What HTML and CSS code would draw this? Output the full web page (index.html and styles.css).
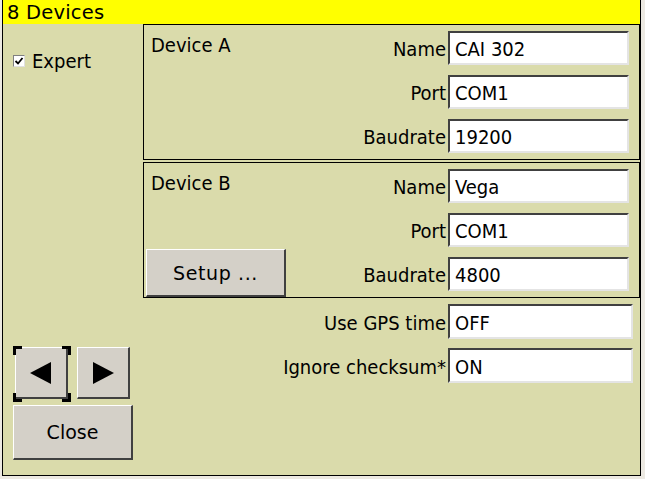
FILE: index.html
```html
<!DOCTYPE html>
<html>
<head>
<meta charset="utf-8">
<link rel="stylesheet" href="styles.css">
</head>
<body>
<div class="window">
  <div class="titlebar">8 Devices</div>
  <div class="content">
    <div class="left">
      <div class="check-row">
        <span class="checkbox">
          <svg width="10" height="10" viewBox="0 0 10 10"><path d="M1.5 5 L4 7.5 L8.5 2" fill="none" stroke="#000" stroke-width="1.8"/></svg>
        </span>
        <span class="check-label">Expert</span>
      </div>
      <div class="left-buttons">
        <div class="arrow-row">
          <div class="btn arrow focused">
            <svg class="arrow-icon" width="22" height="22" viewBox="0 0 22 22"><polygon points="0,11 21,0 21,22" fill="#000"/></svg>
            <svg class="focus-ring" viewBox="0 0 58 56" preserveAspectRatio="none"><path d="M1.5 9 V1.5 H9 M49 1.5 H56.5 V9 M56.5 47 V54.5 H49 M9 54.5 H1.5 V47" fill="none" stroke="#000" stroke-width="3"/></svg>
          </div>
          <div class="btn arrow">
            <svg class="arrow-icon" width="22" height="22" viewBox="0 0 22 22"><polygon points="1,0 22,11 1,22" fill="#000"/></svg>
          </div>
        </div>
        <div class="btn close">Close</div>
      </div>
    </div>
    <div class="right">
      <div class="frame">
        <div class="frame-side"><span class="frame-title">Device A</span></div>
        <div class="fields">
          <div class="row"><span class="label">Name</span><div class="field">CAI 302</div></div>
          <div class="row"><span class="label">Port</span><div class="field">COM1</div></div>
          <div class="row"><span class="label">Baudrate</span><div class="field">19200</div></div>
        </div>
      </div>
      <div class="frame">
        <div class="frame-side">
          <span class="frame-title">Device B</span>
          <div class="btn setup">Setup ...</div>
        </div>
        <div class="fields">
          <div class="row"><span class="label">Name</span><div class="field">Vega</div></div>
          <div class="row"><span class="label">Port</span><div class="field">COM1</div></div>
          <div class="row"><span class="label">Baudrate</span><div class="field">4800</div></div>
        </div>
      </div>
      <div class="extra">
        <div class="row tall"><span class="label">Use GPS time</span><div class="field wide">OFF</div></div>
        <div class="row tall"><span class="label">Ignore checksum*</span><div class="field wide">ON</div></div>
      </div>
    </div>
  </div>
</div>
</body>
</html>
```
FILE: styles.css
```css
html, body {
  margin: 0;
  padding: 0;
}
body {
  background: #ece9e2;
  width: 645px;
  height: 479px;
  overflow: hidden;
  font-family: "DejaVu Sans Condensed", "DejaVu Sans", sans-serif;
  font-size: 20px;
  color: #000;
}
.window {
  margin-left: 2px;
  width: 637px;
  border-left: 1px solid #000;
  border-right: 1px solid #000;
  border-bottom: 1px solid #000;
  background: #dadbab;
}
.titlebar {
  height: 24px;
  background: #ffff00;
  font-family: "DejaVu Sans", sans-serif;
  font-size: 19.5px;
  line-height: 25px;
  padding-left: 4px;
  letter-spacing: 0.2px;
  white-space: nowrap;
}
.content {
  display: flex;
  height: 451px;
}
.left {
  width: 140px;
  flex: none;
  display: flex;
  flex-direction: column;
  justify-content: space-between;
  padding: 26px 0 15px 10px;
  box-sizing: border-box;
}
.check-row {
  display: flex;
  align-items: center;
  gap: 7px;
}
.checkbox {
  width: 12px;
  height: 12px;
  box-sizing: border-box;
  background: #fff;
  border: 1px solid;
  border-color: #808080 #e0e0e0 #e0e0e0 #808080;
  display: flex;
  align-items: center;
  justify-content: center;
}
.check-label {
  line-height: 22px;
}
.btn {
  background: #d4d0c8;
  box-sizing: border-box;
  border-style: solid;
  border-width: 1px 2px 2px 1px;
  border-color: #ffffff #404040 #404040 #ffffff;
  display: flex;
  align-items: center;
  justify-content: center;
  font-family: "DejaVu Sans", sans-serif;
  font-size: 19px;
}
.arrow-row {
  display: flex;
  gap: 9px;
  margin-left: 2px;
}
.arrow {
  width: 53px;
  height: 52px;
  position: relative;
}
.arrow-icon {
  display: block;
}
.focus-ring {
  position: absolute;
  left: -3px;
  top: -2px;
  width: 58px;
  height: 56px;
}
.close {
  margin-top: 6px;
  width: 120px;
  height: 55px;
}
.right {
  flex: 1;
  display: flex;
  flex-direction: column;
}
.frame {
  display: flex;
  border: 1px solid #000;
  margin-bottom: 2px;
}
.frame-side {
  flex: 1;
  display: flex;
  flex-direction: column;
  justify-content: space-between;
  padding: 9px 0 0 2px;
}
.frame-title {
  padding-left: 5px;
  line-height: 22px;
}
.setup {
  width: 140px;
  height: 48px;
  letter-spacing: 0.6px;
}
.fields {
  display: flex;
  flex-direction: column;
  gap: 10px;
  padding: 6px 10px 6px 0;
}
.row {
  display: flex;
  justify-content: flex-end;
  align-items: center;
  gap: 2px;
}
.label {
  white-space: nowrap;
  padding-top: 2px;
}
.field {
  width: 181px;
  height: 34px;
  box-sizing: border-box;
  background: #fff;
  border-style: solid;
  border-width: 2px 2px 2px 2px;
  border-color: #404040 #e4e4e4 #e4e4e4 #404040;
  padding: 2px 0 0 5px;
  display: flex;
  align-items: center;
  white-space: nowrap;
}
.extra {
  display: flex;
  flex-direction: column;
  gap: 9px;
  padding: 4px 7px 0 0;
}
.field.wide {
  width: 185px;
  height: 35px;
}
```
